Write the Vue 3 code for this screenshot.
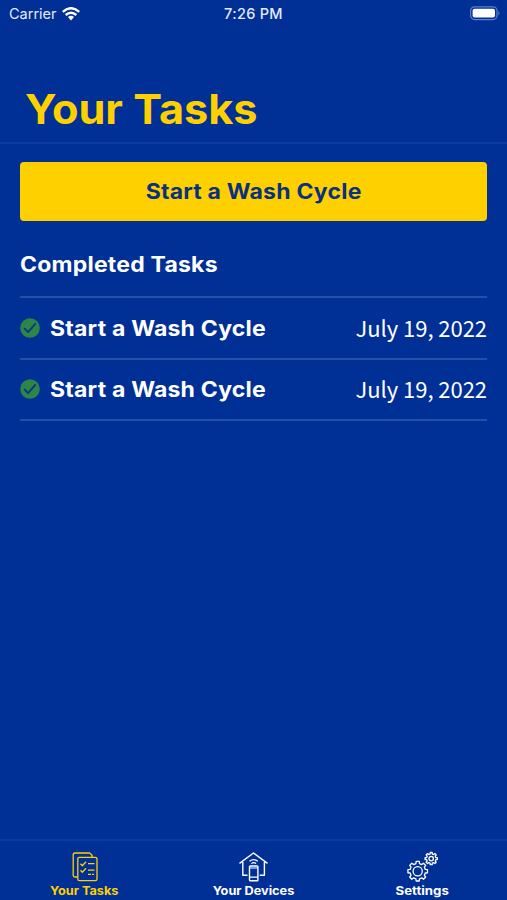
<script setup>
const tasks = [
  { id: 1, name: 'Start a Wash Cycle', date: 'July 19, 2022' },
  { id: 2, name: 'Start a Wash Cycle', date: 'July 19, 2022' },
]

// Closed outline of a cog with `teeth` teeth around (cx, cy)
function gear(cx, cy, inner, outer, teeth) {
  const step = (Math.PI * 2) / teeth
  const points = []
  for (let i = 0; i < teeth; i++) {
    const a = i * step - Math.PI / 2
    for (const [t, r] of [[-0.3, inner], [-0.2, outer], [0.2, outer], [0.3, inner]]) {
      points.push(`${(cx + r * Math.cos(a + t * step)).toFixed(2)} ${(cy + r * Math.sin(a + t * step)).toFixed(2)}`)
    }
  }
  return `M${points.join('L')}Z`
}
const bigGear = gear(10.7, 20.2, 7.8, 9.9, 8)
const smallGear = gear(24.2, 7.6, 4.7, 6.2, 8)
</script>

<template>
  <div class="screen">
    <div class="status">
      <div class="carrier">
        <span>Carrier</span>
        <svg class="wifi" viewBox="0 0 18 14">
          <g fill="none" stroke="#fff" stroke-width="2.4">
            <path d="M.8 4.8Q9-2.4 17.2 4.8" />
            <path d="M3.7 8Q9 3.3 14.3 8" />
          </g>
          <path d="M6 9.9Q9 7.7 12 9.9L9 13.4Z" fill="#fff" />
        </svg>
      </div>
      <span class="clock">7:26 PM</span>
      <svg class="battery" viewBox="0 0 32 16">
        <rect x="1.6" y=".8" width="26.4" height="12.8" rx="4" fill="none" stroke="#5d80c5" stroke-width="1.2" />
        <rect x="3.6" y="2.8" width="22.4" height="8.8" rx="2" fill="#fff" />
        <path d="M29.4 5Q31.6 7.2 29.4 9.4Z" fill="#5d80c5" />
      </svg>
    </div>

    <header class="header"><h1>Your Tasks</h1></header>

    <main class="content">
      <button class="start"><span class="label">Start a Wash Cycle</span></button>
      <h2>Completed Tasks</h2>
      <ul>
        <li v-for="task in tasks" :key="task.id">
          <svg class="check" viewBox="0 0 20 20">
            <circle cx="10" cy="10" r="9.8" fill="#2b8648" />
            <path d="M4.7 10.7L8.1 14.1L15.2 5.9" fill="none" stroke="#0a3586" stroke-width="1.9" stroke-linecap="round" stroke-linejoin="round" />
          </svg>
          <span class="label name">{{ task.name }}</span>
          <span class="date">{{ task.date }}</span>
        </li>
      </ul>
    </main>

    <nav class="tabs">
      <a class="tab active">
        <svg viewBox="0 0 32 32">
          <g fill="none" stroke="currentColor" stroke-width="1.3" stroke-linejoin="round">
            <path d="M23 6V4L20.5 2H6Q4.2 2 4.2 4V24.5Q4.2 26 6 26H8.5" />
            <path d="M10.5 6.3H26.3Q28 6.3 28 8V28Q28 29.7 26.3 29.7H10.5Q8.8 29.7 8.8 28V8Q8.8 6.3 10.5 6.3Z" />
            <path d="M11.5 12.8L13.3 14.7L17 10.7M11.5 19.3L13.3 21.2L17 17.2M19 12.7H25.5M19 19.2H25.5M19 23.4H22M23 23.4H25" />
          </g>
        </svg>
        <span class="tab-label">Your Tasks</span>
      </a>
      <a class="tab">
        <svg viewBox="0 0 32 32">
          <g fill="none" stroke="currentColor" stroke-width="1.4" stroke-linejoin="round">
            <path d="M1.5 12.4L15.5 2L29.5 12.4M4.8 11V24.2H9.5M26.4 11V24.2H21.7" />
            <rect x="11.5" y="15" width="8.4" height="14.7" rx=".8" />
            <path d="M12 17H20M12 26.2H20" stroke-width="1.2" />
            <path d="M11.5 10.2Q15.7 7 19.9 10.2M13.4 12.6Q15.7 10.6 18 12.6" stroke-width="1.2" />
          </g>
        </svg>
        <span class="tab-label devices">Your Devices</span>
      </a>
      <a class="tab">
        <svg viewBox="0 0 32 32">
          <g fill="none" stroke="currentColor" stroke-width="1.3" stroke-linejoin="round">
            <path :d="bigGear" />
            <circle cx="10.7" cy="20.2" r="4.6" />
            <path :d="smallGear" />
            <circle cx="24.2" cy="7.6" r="2.2" />
          </g>
        </svg>
        <span class="tab-label settings">Settings</span>
      </a>
    </nav>
  </div>
</template>

<style>
body { margin: 0; background: #002f95; }
</style>

<style scoped>
.screen {
  display: flex;
  flex-direction: column;
  width: 507px;
  height: 900px;
  overflow: hidden;
  background: #002f95;
  color: #fff;
  font-family: Inter, "Liberation Sans", sans-serif;
}
.status {
  display: grid;
  grid-template-columns: 1fr auto 1fr;
  align-items: center;
  height: 27px;
  padding: 0 6px 0 9px;
  box-sizing: border-box;
  font-size: 14.5px;
  color: #e4ebf9;
}
.carrier { display: flex; align-items: center; gap: 5px; }
.wifi { width: 18px; height: 14px; }
.clock { font-weight: 500; letter-spacing: .3px; margin-right: 3px; }
.battery { width: 32px; height: 16px; justify-self: end; }
.header {
  display: flex;
  align-items: flex-end;
  height: 117px;
  box-sizing: border-box;
  padding: 0 25px 8px;
  border-bottom: 2px solid #0d3a9c;
}
h1 {
  margin: 0;
  color: #ffd000;
  font-size: 41px;
  line-height: 50px;
  font-weight: 700;
  transform: scaleX(1.055);
  transform-origin: left;
}
.content { flex: 1; padding: 18px 20px 0; }
.start {
  display: flex;
  align-items: center;
  justify-content: center;
  width: 467px;
  height: 59px;
  padding: 0;
  border: 0;
  border-radius: 4px;
  background: #ffd000;
  color: #09317f;
}
.label {
  padding-top: 1px;
  font: 700 21px/28px Inter, "Liberation Sans", sans-serif;
  letter-spacing: .2px;
  white-space: nowrap;
  transform: scaleX(1.095);
}
.name { padding-top: 2px; transform-origin: left; }
h2 {
  width: max-content;
  margin: 30px 0 17px;
  font-size: 21px;
  line-height: 28px;
  font-weight: 700;
  letter-spacing: .2px;
  transform: scaleX(1.095);
  transform-origin: left;
}
ul { margin: 0; padding: 0; list-style: none; border-top: 2px solid #2450a6; }
li {
  display: flex;
  align-items: center;
  height: 61.5px;
  box-sizing: border-box;
  border-bottom: 2px solid #2450a6;
}
.check { width: 20px; height: 20px; margin-right: 10px; }
.date {
  margin-left: auto;
  padding-bottom: 2px;
  font: 400 22px/30px "Noto Sans CJK SC", "Noto Sans", sans-serif;
  letter-spacing: -.05px;
  white-space: nowrap;
}
.tabs {
  display: grid;
  grid-template-columns: repeat(3, 1fr);
  height: 61px;
  box-sizing: border-box;
  border-top: 2px solid #0d3a9c;
}
.tab {
  display: flex;
  flex-direction: column;
  align-items: center;
  padding-top: 10px;
  color: #fff;
}
.tab svg { width: 32px; height: 32px; flex: none; }
.tab-label {
  font-size: 12px;
  line-height: 16px;
  font-weight: 700;
  transform: scaleX(1.06);
}
.settings { transform: scaleX(1.1); }
.active { color: #ffd000; }
</style>
